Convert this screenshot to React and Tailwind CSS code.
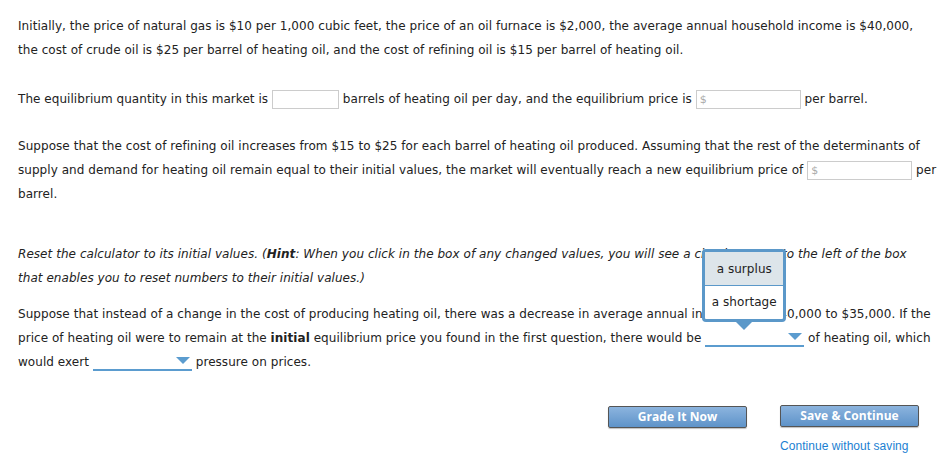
import React from "react";

function Box({ w, dollar }) {
    return (
        <span
            className={`inline-flex items-center align-middle h-[19px] border border-[#cccccc] bg-white px-[3px] text-[11px] text-[#aaaaaa] ${w}`}
        >
            {dollar ? "$" : ""}
        </span>
    );
}

function Select({ w, children }) {
    return (
        <span className={`relative inline-block align-[-5px] h-[18px] border-b-2 border-[#5b9ccf] ${w}`}>
            <svg className="absolute right-[2px] top-[4px]" width="14" height="7" viewBox="0 0 14 7">
                <polygon points="0,0 14,0 7,7" fill="#5b9ccf" />
            </svg>
            {children}
        </span>
    );
}

export default function App() {
    return (
        <div className="w-[946px] h-[466px] bg-white text-[#222] font-['DejaVu_Sans',Verdana,sans-serif] text-[12px] leading-[24px] pl-[18px] pt-[14px] tracking-[0.05px]">
            <p>
                Initially, the price of natural gas is $10 per 1,000 cubic feet, the price of an oil furnace is $2,000, the average annual household income is $40,000,
                <br />
                the cost of crude oil is $25 per barrel of heating oil, and the cost of refining oil is $15 per barrel of heating oil.
            </p>

            <p className="mt-[25px]">
                The equilibrium quantity in this market is <Box w="w-[67px]" /> barrels of heating oil per day, and the equilibrium price is{" "}
                <Box w="w-[105px]" dollar /> per barrel.
            </p>

            <p className="mt-[23px] whitespace-nowrap">
                Suppose that the cost of refining oil increases from $15 to $25 for each barrel of heating oil produced. Assuming that the rest of the determinants of
                <br />
                supply and demand for heating oil remain equal to their initial values, the market will eventually reach a new equilibrium price of{" "}
                <Box w="w-[105px]" dollar /> per
                <br />
                barrel.
            </p>

            <p className="mt-[36px] italic whitespace-nowrap">
                Reset the calculator to its initial values. (<b>Hint</b>: When you click in the box of any changed values, you will see a circular arrow to the left of the box
                <br />
                that enables you to reset numbers to their initial values.)
            </p>

            <p className="mt-[12px] whitespace-nowrap">
                Suppose that instead of a change in the cost of producing heating oil, there was a decrease in average annual income from $40,000 to $35,000. If the
                <br />
                price of heating oil were to remain at the <b>initial</b> equilibrium price you found in the first question, there would be{" "}
                <Select w="w-[99px]">
                    <span className="absolute left-[-3px] bottom-[23px] z-10 w-[84px]">
                        <span className="block rounded-[4px] border-[3px] border-[#5b98c9] bg-white overflow-hidden">
                            <span className="block h-[34px] leading-[34px] bg-[#dde5ea] text-center border-b border-[#5b98c9]">a surplus</span>
                            <span className="block h-[33px] leading-[32px] text-center">a shortage</span>
                        </span>
                        <svg className="absolute left-[34px] bottom-[-8px]" width="16" height="8" viewBox="0 0 16 8">
                            <polygon points="0,0 16,0 8,8" fill="#5b98c9" />
                        </svg>
                    </span>
                </Select>{" "}
                of heating oil, which
                <br />
                would exert <Select w="w-[99px]" /> pressure on prices.
            </p>

            <div className="mt-[31px] flex justify-end gap-[33px] pr-[27px]">
                <div className="w-[139px]">
                    <button className="w-full h-[22px] rounded-[2px] border border-[#555] bg-gradient-to-b from-[#8cb4de] to-[#5e93c9] text-white text-[12px] font-bold font-['Open_Sans',sans-serif] leading-none shadow-[0_1px_1px_rgba(0,0,0,0.25)]">
                        Grade It Now
                    </button>
                </div>
                <div className="w-[139px] flex flex-col">
                    <button className="w-full h-[22px] rounded-[2px] border border-[#555] bg-gradient-to-b from-[#8cb4de] to-[#5e93c9] text-white text-[12px] font-bold font-['Open_Sans',sans-serif] leading-none shadow-[0_1px_1px_rgba(0,0,0,0.25)]">
                        Save &amp; Continue
                    </button>
                    <a className="mt-[12px] text-[12px] leading-[14px] text-[#1b7fd2] font-['Liberation_Sans',Arial,sans-serif] whitespace-nowrap">
                        Continue without saving
                    </a>
                </div>
            </div>
        </div>
    );
}
